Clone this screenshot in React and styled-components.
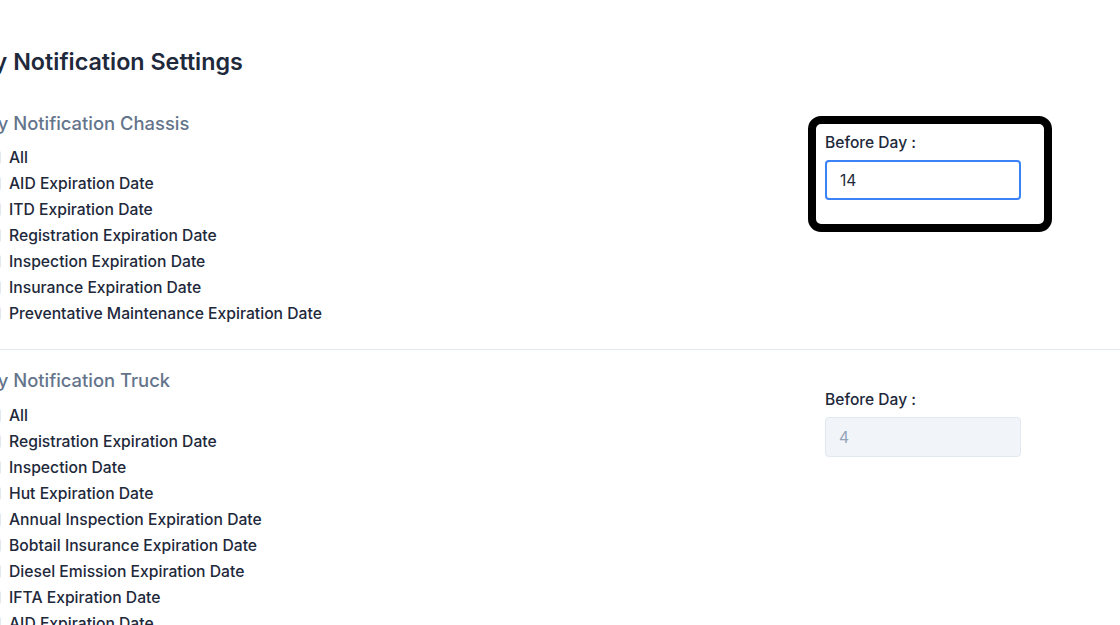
import React from 'react';
import styled, { createGlobalStyle } from 'styled-components';

const GlobalStyle = createGlobalStyle`
  body {
    margin: 0;
    background: #ffffff;
    font-family: Inter, "Noto Sans", sans-serif;
    overflow: hidden;
  }
`;

const Page = styled.div`
  width: 1180px;
  margin-left: -60px;
  padding-top: 46px;
`;

const Title = styled.h1`
  margin: 0 0 31px -4px;
  font-size: 23.3px;
  line-height: 32px;
  font-weight: 600;
  color: #1e293b;
`;

const Section = styled.section`
  display: grid;
  grid-template-columns: 1fr 196px;
  padding: ${p => (p.first ? '0 99px 23px 0' : '16px 99px 0 0')};
  border-bottom: ${p => (p.first ? '1px solid #e2e8f0' : 'none')};
`;

const Heading = styled.h2`
  margin: 0 0 ${p => (p.gap || 7)}px 13px;
  font-size: 18.4px;
  line-height: 28px;
  font-weight: 500;
  color: #64748b;
`;

const List = styled.ul`
  list-style: none;
  margin: 0;
  padding: 0 0 0 46px;
`;

const Item = styled.li`
  display: flex;
  align-items: center;
  gap: 8px;
  height: 26px;
  font-size: 15.7px;
  font-weight: 500;
  color: #1e293b;
`;

const Check = styled.span`
  width: 15px;
  height: 15px;
  border: 1px solid #e2e8f0;
  border-radius: 3px;
  box-sizing: border-box;
  flex: none;
`;

const Field = styled.div`
  position: relative;
  margin-top: 24px;
  align-self: start;
`;

const Highlight = styled.div`
  position: absolute;
  left: -17px;
  right: -31px;
  top: -17px;
  bottom: -32px;
  border: 8px solid #000;
  border-radius: 13px;
  pointer-events: none;
`;

const Label = styled.label`
  display: block;
  font-size: 15.6px;
  line-height: 20px;
  font-weight: 500;
  color: #1e293b;
  margin-bottom: 7px;
`;

const Input = styled.input`
  box-sizing: border-box;
  width: 196px;
  height: 40px;
  padding: 0 13px;
  font-family: inherit;
  font-size: 15.6px;
  border-radius: 4px;
  border: ${p => (p.disabled ? '1px solid #e2e8f0' : '2px solid #3b82f6')};
  background: ${p => (p.disabled ? '#f1f5f9' : '#ffffff')};
  color: ${p => (p.disabled ? '#94a3b8' : '#1e293b')};
  outline: none;
`;

const chassis = [
  'All',
  'AID Expiration Date',
  'ITD Expiration Date',
  'Registration Expiration Date',
  'Inspection Expiration Date',
  'Insurance Expiration Date',
  'Preventative Maintenance Expiration Date'
];

const truck = [
  'All',
  'Registration Expiration Date',
  'Inspection Date',
  'Hut Expiration Date',
  'Annual Inspection Expiration Date',
  'Bobtail Insurance Expiration Date',
  'Diesel Emission Expiration Date',
  'IFTA Expiration Date',
  'AID Expiration Date'
];

const App = () => {
  return (
    <>
      <GlobalStyle />
      <Page>
        <Title>Expiry Notification Settings</Title>

        <Section first>
          <div>
            <Heading>Expiry Notification Chassis</Heading>
            <List>
              {chassis.map(item => (
                <Item key={item}>
                  <Check />
                  {item}
                </Item>
              ))}
            </List>
          </div>
          <Field>
            <Highlight />
            <Label>Before Day :</Label>
            <Input defaultValue="14" />
          </Field>
        </Section>

        <Section>
          <div>
            <Heading gap={8}>Expiry Notification Truck</Heading>
            <List>
              {truck.map(item => (
                <Item key={item}>
                  <Check />
                  {item}
                </Item>
              ))}
            </List>
          </div>
          <Field>
            <Label>Before Day :</Label>
            <Input disabled defaultValue="4" />
          </Field>
        </Section>
      </Page>
    </>
  );
};

export default App;
